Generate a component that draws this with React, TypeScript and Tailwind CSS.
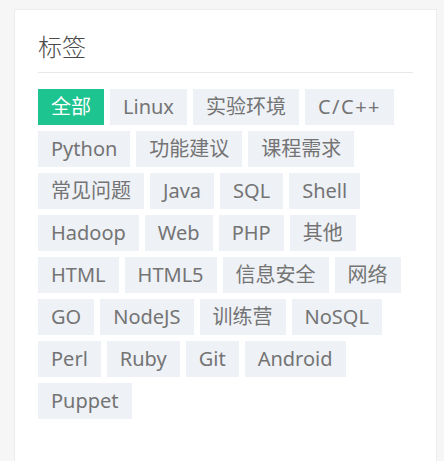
import React from "react";

const tags = [
  "全部","Linux","实验环境","C/C++","Python","功能建议","课程需求","常见问题","Java","SQL","Shell","Hadoop","Web","PHP","其他","HTML","HTML5","信息安全","网络","GO","NodeJS","训练营","NoSQL","Perl","Ruby","Git","Android","Puppet",
];

export default function App() {
  return (
    <div className="w-[444px] h-[461px] bg-[#f6f6f6] pt-[9px] pl-[14px] pr-[7px] overflow-hidden" style={{ fontFamily: '"Noto Sans", "Noto Sans CJK SC", sans-serif' }}>
      <div className="h-[460px] bg-white border border-[#ececec] pt-[20px] px-[23px]">
        <div className="text-[24px] leading-[32px] text-[#4a4a4a] pb-[10px] border-b border-[#e8e8e8]" style={{ fontFamily: '"Noto Sans CJK SC", sans-serif', fontWeight: 300 }}>标签</div>
        <div className="flex flex-wrap gap-[6px] pt-[16px] pr-[8px]">
          {tags.map((t, i) => (
            <div
              key={t}
              className={
                i === 0
                  ? "h-[36px] px-[13px] flex items-center text-[20px] bg-[#1ec48f] text-white"
                  : t === "C/C++"
                  ? "h-[36px] px-[13px] flex items-center text-[20px] tracking-[1.5px] bg-[#eef1f6] text-[#747474]"
                  : "h-[36px] px-[13px] flex items-center text-[20px] bg-[#eef1f6] text-[#747474]"
              }
            >
              {t}
            </div>
          ))}
        </div>
      </div>
    </div>
  );
}
